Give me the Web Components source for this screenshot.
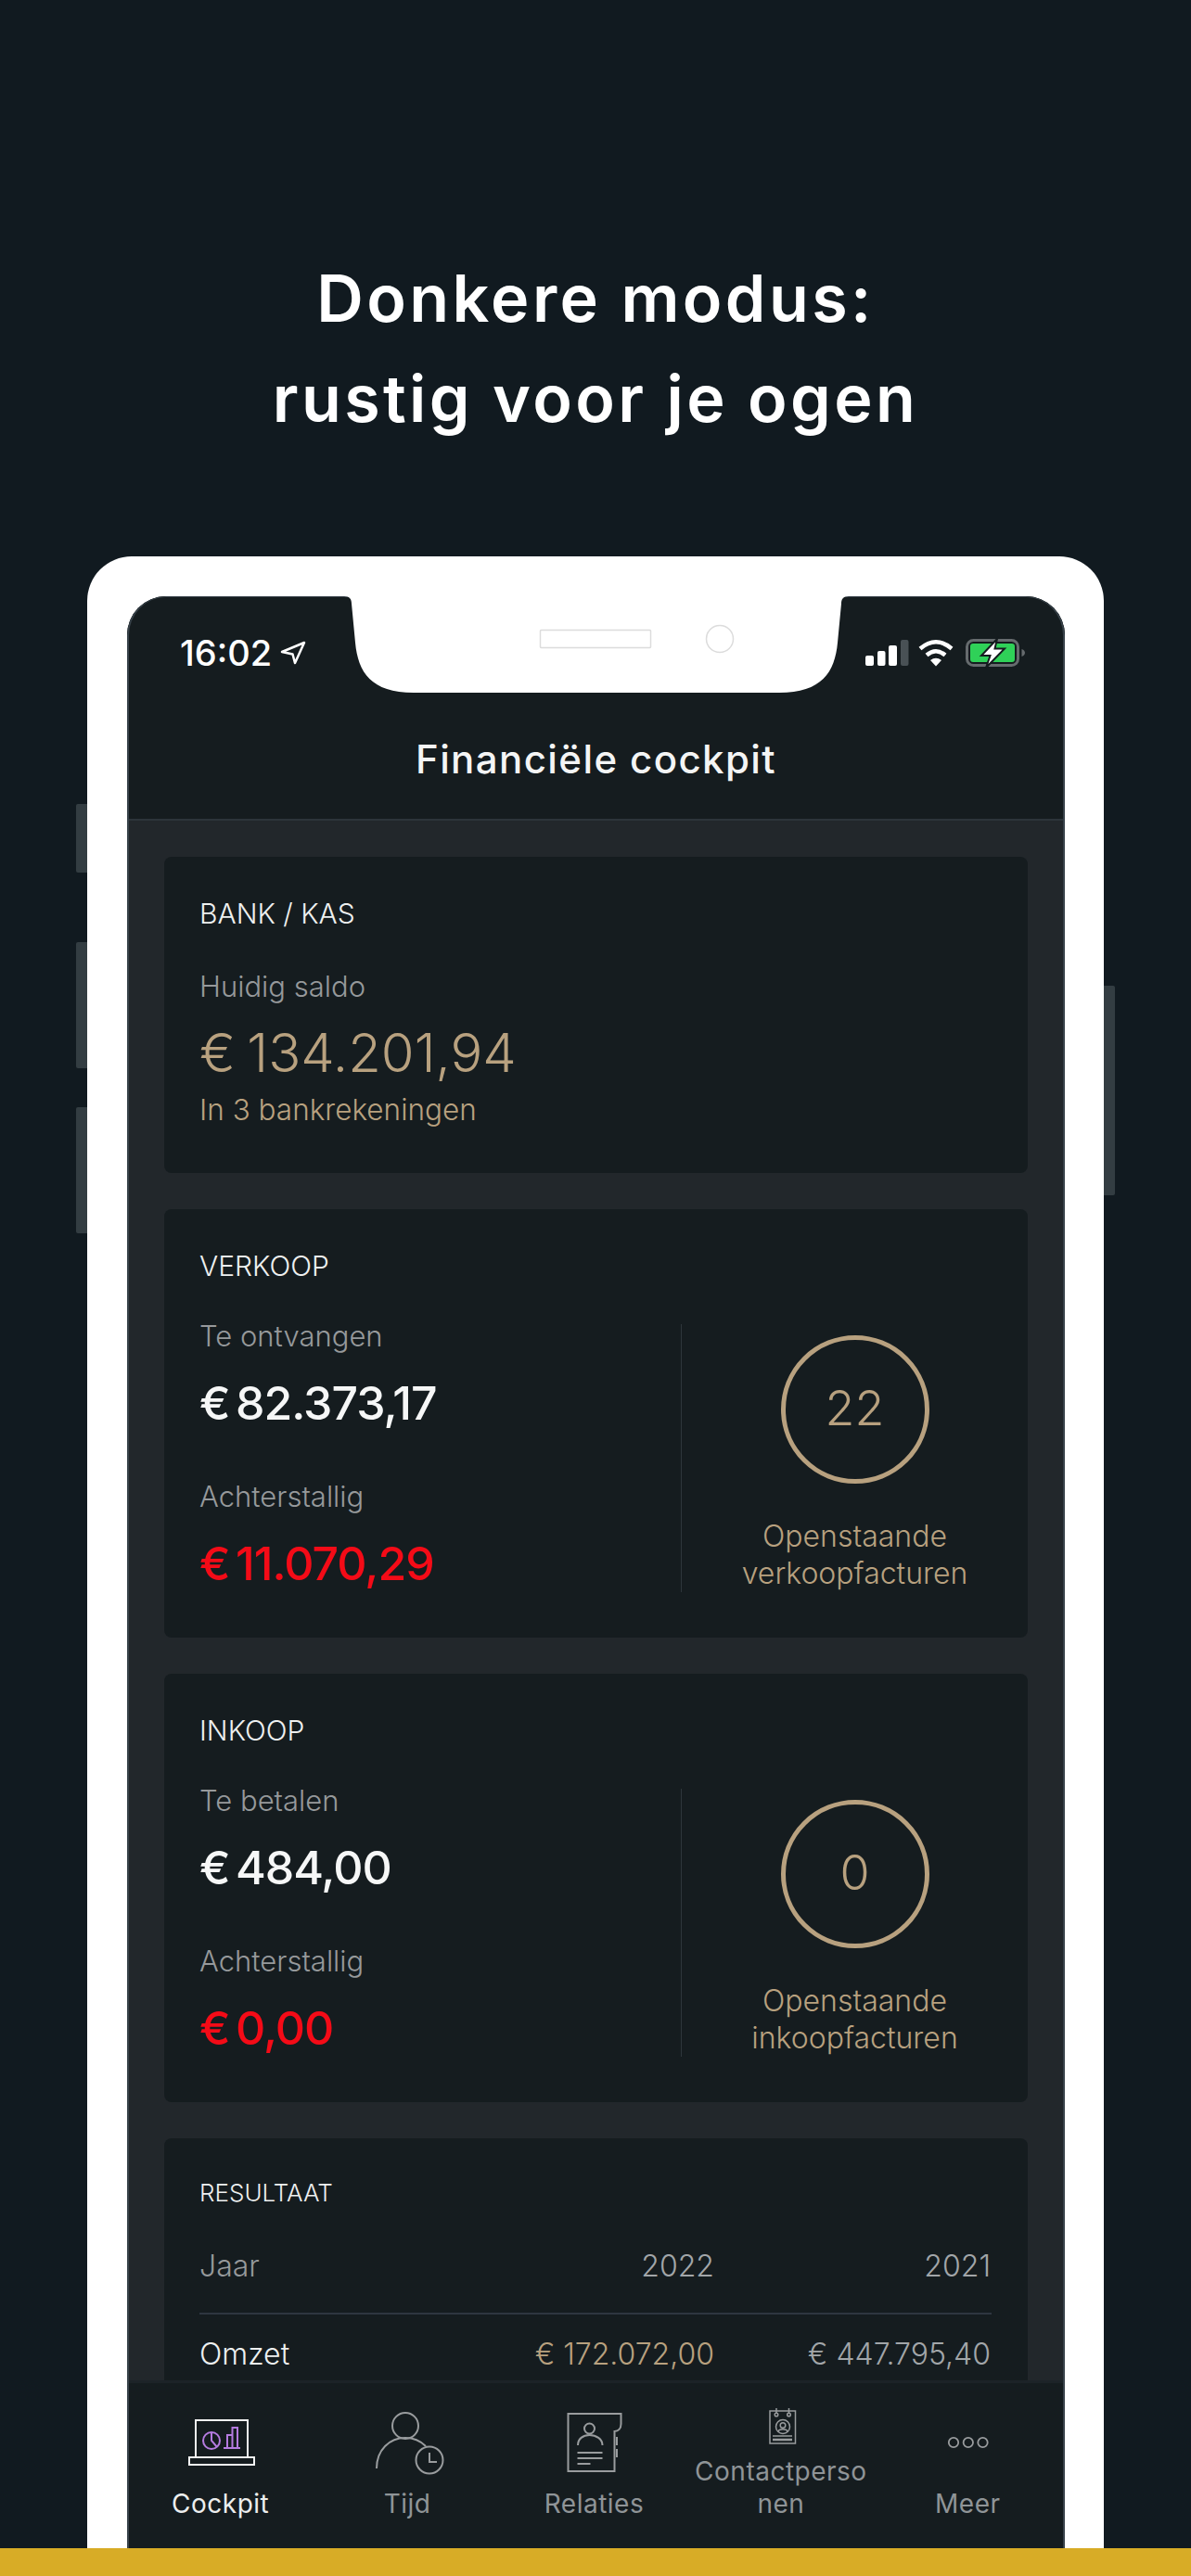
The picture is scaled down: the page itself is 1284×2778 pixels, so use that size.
<!DOCTYPE html>
<html lang="nl">
<head>
<meta charset="utf-8">
<title>Donkere modus</title>
<style>
  html, body { margin: 0; padding: 0; background: #111a20; }
</style>
</head>
<body>
<store-page>
  <span slot="heading">Donkere modus:<br>rustig voor je ogen</span>
  <phone-frame>
    <status-bar slot="top"></status-bar>
    <screen-header slot="top" title="Financiële cockpit"></screen-header>
    <fin-card title="BANK / KAS">
      <amount-line label="Huidig saldo" value="€ 134.201,94" tone="tan" size="big" first></amount-line>
      <div style="font:300 31.500px/36px Inter,sans-serif;color:#b8a17f;margin-top:11px;padding-bottom:50px">In 3 bankrekeningen</div>
    </fin-card>
    <fin-card title="VERKOOP">
      <invoice-panel count="22" caption="verkoopfacturen">
        <amount-line label="Te ontvangen" value="€ 82.373,17" first></amount-line>
        <amount-line label="Achterstallig" value="€ 11.070,29" tone="red"></amount-line>
      </invoice-panel>
    </fin-card>
    <fin-card title="INKOOP">
      <invoice-panel count="0" caption="inkoopfacturen">
        <amount-line label="Te betalen" value="€ 484,00" first></amount-line>
        <amount-line label="Achterstallig" value="€ 0,00" tone="red"></amount-line>
      </invoice-panel>
    </fin-card>
    <fin-card title="RESULTAAT" small>
      <result-table>
        <result-row head label="Jaar" now="2022" prev="2021"></result-row>
        <result-row label="Omzet" now="€ 172.072,00" prev="€ 447.795,40"></result-row>
      </result-table>
    </fin-card>
    <tab-bar slot="bottom">
      <tab-item label="Cockpit" active>
        <svg width="80" height="93" viewBox="198 2590 80 93" fill="none">
          <path d="M211 2649V2610H267V2649" stroke="#f2f3f3" stroke-width="2"/>
          <rect x="204" y="2650" width="70" height="8" stroke="#f2f3f3" stroke-width="2"/>
          <circle cx="228" cy="2632" r="9" stroke="#b57be0" stroke-width="2"/>
          <path d="M228 2623V2632L234 2639" stroke="#b57be0" stroke-width="2"/>
          <path d="M241 2640H259M245 2640V2626H250.500M250.500 2640V2618H256V2640" stroke="#b57be0" stroke-width="2"/>
        </svg>
      </tab-item>
      <tab-item label="Tijd">
        <svg width="80" height="93" viewBox="399 2590 80 93" fill="none" stroke="#999c9e" stroke-width="2">
          <circle cx="437" cy="2616" r="14"/>
          <path d="M406 2662C406 2642 420 2629 437 2629C445 2629 453 2632 459 2638"/>
          <circle cx="463" cy="2653" r="14.500"/>
          <path d="M463 2645V2655H471"/>
        </svg>
      </tab-item>
      <tab-item label="Relaties">
        <svg width="80" height="93" viewBox="600.500 2590 80 93" fill="none" stroke="#999c9e" stroke-width="2">
          <path d="M613 2603H670V2614C670 2619 667 2622 663 2622V2665H613Z"/>
          <circle cx="636" cy="2619" r="5.500"/>
          <path d="M623.500 2637C623.500 2630 629 2626 636 2626C643 2626 650 2630 650 2637"/>
          <path d="M623 2645H650M623 2651H650M623 2657H637M665.500 2628V2637M665.500 2641V2650"/>
        </svg>
      </tab-item>
      <tab-item label="Contactpersonen">
        <svg width="76" height="58" viewBox="804 2590 76 58" fill="none" stroke="#999c9e" stroke-width="1.500">
          <rect x="830" y="2600" width="27.500" height="35"/>
          <path d="M837 2597V2602M850.500 2597V2602"/>
          <circle cx="837" cy="2604" r="1.800"/>
          <circle cx="850.500" cy="2604" r="1.800"/>
          <circle cx="844" cy="2617" r="7.500"/>
          <circle cx="844" cy="2615.500" r="2.800"/>
          <path d="M839 2622C840 2619 848 2619 849 2622"/>
          <path d="M833 2627H854"/>
          <path d="M833 2631H854" stroke-width="2.500"/>
        </svg>
      </tab-item>
      <tab-item label="Meer">
        <svg width="80" height="93" viewBox="1003.500 2590 80 93" fill="none" stroke="#999c9e" stroke-width="1.800">
          <circle cx="1028.500" cy="2634" r="5.200"/>
          <circle cx="1044.300" cy="2634" r="5.200"/>
          <circle cx="1060" cy="2634" r="5.200"/>
        </svg>
      </tab-item>
    </tab-bar>
  </phone-frame>
</store-page>

<script>
const SANS = "Inter, 'Liberation Sans', sans-serif";

class StorePage extends HTMLElement {
  constructor() {
    super();
    this.attachShadow({ mode: "open" });
    this.shadowRoot.innerHTML = `
      <style>
        :host {
          display: flex;
          flex-direction: column;
          width: 1284px;
          height: 2778px;
          overflow: hidden;
          background: #111a20;
        }
        .heading {
          height: 332px;
          padding-top: 268px;
          text-align: center;
          color: #fff;
          font: 600 70px/108px ${SANS};
          letter-spacing: 3.400px;
        }
        .stage { flex: 1; min-height: 0; display: flex; }
        .strip { height: 30px; background: #d8ac26; }
      </style>
      <div class="heading"><slot name="heading"></slot></div>
      <div class="stage"><slot></slot></div>
      <div class="strip"></div>
    `;
  }
}

class PhoneFrame extends HTMLElement {
  constructor() {
    super();
    this.attachShadow({ mode: "open" });
    this.shadowRoot.innerHTML = `
      <style>
        :host {
          display: block;
          position: relative;
          flex: 1;
          margin: 0 94px;
          padding: 43px 42px 0 43px;
          background: #fff;
          border-radius: 48px 48px 0 0;
        }
        .button { position: absolute; width: 12px; background: #333d42; border-radius: 2px 0 0 2px; }
        .b1 { left: -12px; top: 267px; height: 74px; }
        .b2 { left: -12px; top: 416px; height: 136px; }
        .b3 { left: -12px; top: 594px; height: 136px; }
        .b4 { right: -12px; top: 463px; height: 226px; border-radius: 0 2px 2px 0; }
        .screen {
          position: relative;
          display: flex;
          flex-direction: column;
          height: 100%;
          overflow: hidden;
          background: #22272b;
          border-radius: 42px 42px 0 0;
        }
        .screen::after {
          content: "";
          position: absolute;
          inset: 0;
          border: solid #38424a;
          border-width: 1px 2px 0 2px;
          border-radius: 42px 42px 0 0;
          pointer-events: none;
        }
        .content {
          flex: 1;
          min-height: 0;
          overflow: hidden;
          display: flex;
          flex-direction: column;
          gap: 39px;
          padding: 39px 40px 0;
        }
        .notch { position: absolute; left: 233px; top: 0; z-index: 2; }
      </style>
      <i class="button b1"></i><i class="button b2"></i><i class="button b3"></i><i class="button b4"></i>
      <div class="screen">
        <slot name="top"></slot>
        <div class="content"><slot></slot></div>
        <slot name="bottom"></slot>
        <svg class="notch" width="546" height="105" viewBox="0 0 546 105">
          <path d="M1 0H545C539 0 537 3 537 8L533 50C530 82 516 104 470 104H76C30 104 16 82 13 50L9 8C9 3 7 0 1 0Z" fill="#fff"/>
          <rect x="212.500" y="36.500" width="119" height="19" rx="1" fill="#fff" stroke="#dcdcdc" stroke-width="1.500"/>
          <circle cx="406" cy="46" r="14.500" fill="#fff" stroke="#dcdcdc" stroke-width="1.500"/>
        </svg>
      </div>
    `;
  }
}

class StatusBar extends HTMLElement {
  constructor() {
    super();
    this.attachShadow({ mode: "open" });
    this.shadowRoot.innerHTML = `
      <style>
        :host {
          display: flex;
          align-items: center;
          justify-content: space-between;
          padding: 39px 42px 0 57px;
          background: #151c1f;
          color: #fff;
        }
        .time { display: flex; align-items: center; gap: 9px; font: 500 38px/44px ${SANS}; }
        svg { display: block; }
      </style>
      <div class="time">
        <span>16:02</span>
        <svg width="28" height="26" viewBox="306 692 28 26" fill="none">
          <path d="M308 704L332 694L322 716L319.500 706.500Z" stroke="#fff" stroke-width="2.500" stroke-linejoin="round"/>
        </svg>
      </div>
      <svg width="176" height="36" viewBox="930 686 176 36">
        <rect x="933" y="707" width="9" height="11" rx="2" fill="#fff"/>
        <rect x="946" y="702" width="8.500" height="16" rx="2" fill="#fff"/>
        <rect x="958" y="696" width="9" height="22" rx="2" fill="#fff"/>
        <rect x="971" y="690" width="8.500" height="28" rx="2" fill="#495155"/>
        <g fill="none" stroke="#fff" stroke-width="4.500">
          <path d="M992 699.500Q1009 685 1026 699.500"/>
          <path d="M999 706.500Q1009 698 1019 706.500"/>
        </g>
        <path d="M1003 712Q1009 707.500 1015 712L1009 718.500Z" fill="#fff"/>
        <rect x="1042.500" y="690.500" width="55" height="27" rx="7" fill="none" stroke="#666b6e" stroke-width="3"/>
        <rect x="1046" y="694" width="48" height="20" rx="3" fill="#2fd158"/>
        <path d="M1101.500 700C1104 701 1105 702.500 1105 704C1105 705.500 1104 707 1101.500 708Z" fill="#666b6e"/>
        <path d="M1075 689L1058 707H1067.500L1063 720L1083 699.500H1072.500Z" fill="#fff" stroke="#151c1f" stroke-width="2"/>
      </svg>
    `;
  }
}

class ScreenHeader extends HTMLElement {
  static get observedAttributes() { return ["title"]; }
  constructor() {
    super();
    this.attachShadow({ mode: "open" });
  }
  connectedCallback() {
    this.shadowRoot.innerHTML = `
      <style>
        :host {
          display: block;
          height: 159px;
          box-sizing: border-box;
          padding-top: 68px;
          background: #151c1f;
          border-bottom: 2px solid #2c343a;
          text-align: center;
          color: #f4f5f5;
          font: 500 42px/50px ${SANS};
          letter-spacing: 1.400px;
        }
      </style>
      <span>${this.getAttribute("title") || ""}</span>
    `;
  }
}

class FinCard extends HTMLElement {
  constructor() {
    super();
    this.attachShadow({ mode: "open" });
  }
  connectedCallback() {
    const small = this.hasAttribute("small");
    this.shadowRoot.innerHTML = `
      <style>
        :host {
          display: block;
          flex: none;
          padding: 43px 0 0 38px;
          background: #151c1f;
          border-radius: 8px;
        }
        .title {
          color: #eef0f0;
          font: 300 ${small ? "26px/32px" : "30px/36px"} ${SANS};
        }
      </style>
      <div class="title">${this.getAttribute("title") || ""}</div>
      <slot></slot>
    `;
  }
}

class AmountLine extends HTMLElement {
  constructor() {
    super();
    this.attachShadow({ mode: "open" });
  }
  connectedCallback() {
    const tone = this.getAttribute("tone");
    const big = this.getAttribute("size") === "big";
    const colors = { tan: "#b8a17f", red: "#f40b17" };
    const first = this.hasAttribute("first");
    this.shadowRoot.innerHTML = `
      <style>
        :host { display: block; margin-top: ${first ? (big ? 43 : 0) : 53}px; }
        .label { color: #96999b; font: 300 31px/36px ${SANS}; }
        .value {
          margin-top: ${big ? 20 : 24}px;
          color: ${colors[tone] || "#f6f7f7"};
          font: ${big ? "300 58px/66px" : "500 50px/60px"} ${SANS};
          letter-spacing: ${big ? 0 : -1}px;
          word-spacing: ${big ? -4 : -6}px;
        }
      </style>
      <div class="label">${this.getAttribute("label")}</div>
      <div class="value">${this.getAttribute("value")}</div>
    `;
  }
}

class InvoicePanel extends HTMLElement {
  constructor() {
    super();
    this.attachShadow({ mode: "open" });
  }
  connectedCallback() {
    this.shadowRoot.innerHTML = `
      <style>
        :host {
          display: grid;
          grid-template-columns: 519px 1px 1fr;
          margin-top: 40px;
          padding-bottom: 49px;
        }
        .rule { background: #2e363b; margin-top: 5px; }
        .side {
          display: flex;
          flex-direction: column;
          align-items: center;
          padding-top: 17px;
          color: #b8a17f;
          font: 300 32px/40px ${SANS};
          text-align: center;
        }
        .ring {
          display: flex;
          align-items: center;
          justify-content: center;
          width: 160px;
          height: 160px;
          box-sizing: border-box;
          margin-bottom: 37px;
          padding-bottom: 2px;
          border: 5px solid #b8a17f;
          border-radius: 50%;
          font-size: 52px;
          line-height: 1;
        }
      </style>
      <div><slot></slot></div>
      <div class="rule"></div>
      <div class="side">
        <div class="ring">${this.getAttribute("count")}</div>
        <div>Openstaande<br>${this.getAttribute("caption")}</div>
      </div>
    `;
  }
}

class ResultTable extends HTMLElement {
  constructor() {
    super();
    this.attachShadow({ mode: "open" });
    this.shadowRoot.innerHTML = `
      <style>
        :host { display: block; margin-top: 44px; padding-right: 39px; }
      </style>
      <slot></slot>
    `;
  }
}

class ResultRow extends HTMLElement {
  constructor() {
    super();
    this.attachShadow({ mode: "open" });
  }
  connectedCallback() {
    const head = this.hasAttribute("head");
    this.shadowRoot.innerHTML = `
      <style>
        :host {
          display: grid;
          grid-template-columns: 1fr 261px 299px;
          font: 300 32px/38px ${SANS};
          color: #8f9498;
          ${head ? "padding-bottom: 31px; border-bottom: 2px solid #2e3640; margin-bottom: 24px;" : "padding-bottom: 30px;"}
        }
        .label { color: ${head ? "#96999b" : "#eef0f0"}; }
        .now { text-align: right; color: ${head ? "#a2a6a9" : "#b8a17f"}; }
        .prev { text-align: right; color: #a2a6a9; padding-right: 1px; }
      </style>
      <div class="label">${this.getAttribute("label")}</div>
      <div class="now">${this.getAttribute("now")}</div>
      <div class="prev">${this.getAttribute("prev")}</div>
    `;
  }
}

class TabBar extends HTMLElement {
  constructor() {
    super();
    this.attachShadow({ mode: "open" });
    this.shadowRoot.innerHTML = `
      <style>
        :host {
          display: grid;
          grid-template-columns: repeat(5, 1fr);
          height: 181px;
          box-sizing: border-box;
          padding: 0 4px 30px 0;
          background: #151c1f;
          border-top: 3px solid #1c2328;
          align-items: end;
        }
      </style>
      <slot></slot>
    `;
  }
}

class TabItem extends HTMLElement {
  constructor() {
    super();
    this.attachShadow({ mode: "open" });
  }
  connectedCallback() {
    const active = this.hasAttribute("active");
    this.shadowRoot.innerHTML = `
      <style>
        :host {
          display: flex;
          flex-direction: column;
          align-items: center;
          color: ${active ? "#eceeee" : "#8f9497"};
          font: 400 28px/35px ${SANS};
          letter-spacing: 0.500px;
          text-align: center;
        }
        ::slotted(svg) { display: block; }
        .label { width: 192px; word-break: break-all; }
      </style>
      <slot></slot>
      <div class="label">${this.getAttribute("label")}</div>
    `;
  }
}

customElements.define("store-page", StorePage);
customElements.define("phone-frame", PhoneFrame);
customElements.define("status-bar", StatusBar);
customElements.define("screen-header", ScreenHeader);
customElements.define("fin-card", FinCard);
customElements.define("amount-line", AmountLine);
customElements.define("invoice-panel", InvoicePanel);
customElements.define("result-table", ResultTable);
customElements.define("result-row", ResultRow);
customElements.define("tab-bar", TabBar);
customElements.define("tab-item", TabItem);
</script>
</body>
</html>
